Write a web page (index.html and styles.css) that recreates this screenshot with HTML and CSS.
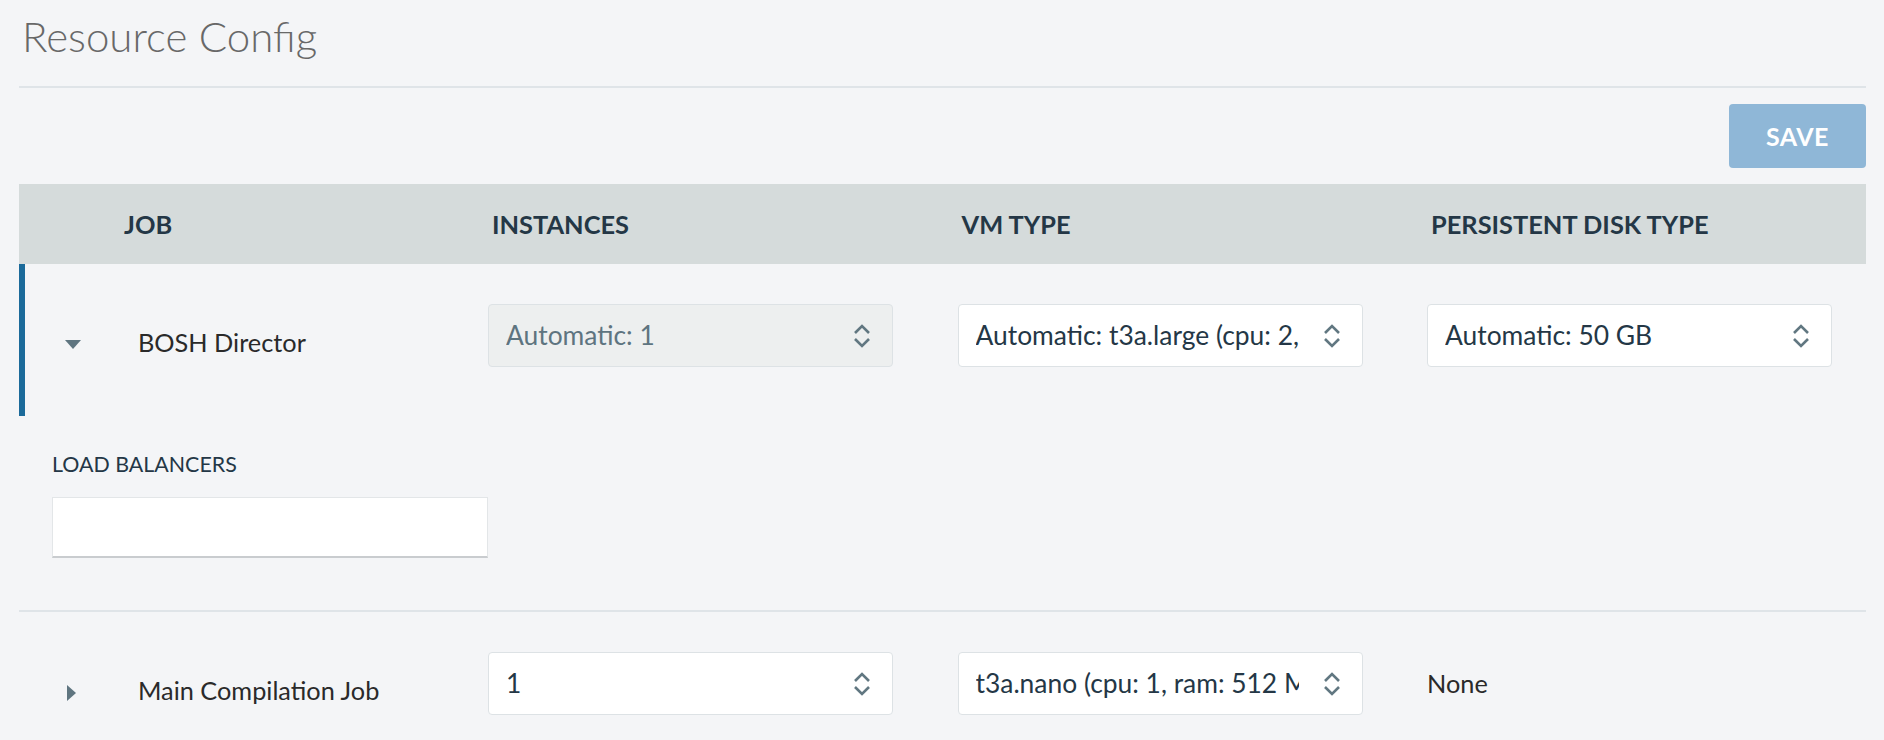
FILE: index.html
```html
<!DOCTYPE html>
<html>
<head>
<meta charset="utf-8">
<link rel="stylesheet" href="styles.css">
</head>
<body>
<div class="page">
  <h1 class="title">Resource Config</h1>
  <div class="toolbar"><button class="save">SAVE</button></div>
  <div class="table">
    <div class="thead">
      <div class="th"></div>
      <div class="th th-job">JOB</div>
      <div class="th"><span>INSTANCES</span></div>
      <div class="th"><span>VM TYPE</span></div>
      <div class="th"><span>PERSISTENT DISK TYPE</span></div>
    </div>
    <div class="job">
      <div class="job-row expanded">
        <div class="toggle"><span class="tri-down"></span></div>
        <div class="name">BOSH Director</div>
        <div class="cell"><div class="select disabled"><span class="select-text">Automatic: 1</span><svg class="chev" viewBox="0 0 18 28" width="18" height="28"><path d="M2 11 L9 4 L16 11 M2 17 L9 24 L16 17"/></svg></div></div>
        <div class="cell"><div class="select"><span class="select-text">Automatic: t3a.large (cpu: 2, ram: 8 GB, disk: 32 GB)</span><svg class="chev" viewBox="0 0 18 28" width="18" height="28"><path d="M2 11 L9 4 L16 11 M2 17 L9 24 L16 17"/></svg></div></div>
        <div class="cell"><div class="select"><span class="select-text">Automatic: 50 GB</span><svg class="chev" viewBox="0 0 18 28" width="18" height="28"><path d="M2 11 L9 4 L16 11 M2 17 L9 24 L16 17"/></svg></div></div>
      </div>
      <div class="details">
        <div class="label">LOAD BALANCERS</div>
        <div class="text-input"></div>
      </div>
    </div>
    <div class="job">
      <div class="job-row">
        <div class="toggle"><span class="tri-right"></span></div>
        <div class="name">Main Compilation Job</div>
        <div class="cell"><div class="select"><span class="select-text">1</span><svg class="chev" viewBox="0 0 18 28" width="18" height="28"><path d="M2 11 L9 4 L16 11 M2 17 L9 24 L16 17"/></svg></div></div>
        <div class="cell"><div class="select"><span class="select-text">t3a.nano (cpu: 1, ram: 512 MB, disk: 8 GB)</span><svg class="chev" viewBox="0 0 18 28" width="18" height="28"><path d="M2 11 L9 4 L16 11 M2 17 L9 24 L16 17"/></svg></div></div>
        <div class="cell"><div class="plain">None</div></div>
      </div>
    </div>
  </div>
</div>
</body>
</html>
```
FILE: styles.css
```css
html, body {
  margin: 0;
  padding: 0;
  background: #f4f5f7;
}
body {
  font-family: Lato, "Noto Sans", sans-serif;
  color: #2a2a2a;
}
.page {
  padding: 0 18px 0 19px;
}
.title {
  margin: 0;
  padding: 11px 0 25px 3px;
  font-size: 42px;
  font-weight: 300;
  line-height: 50px;
  color: #686868;
  border-bottom: 2px solid #dfe4e8;
}
.toolbar {
  display: flex;
  justify-content: flex-end;
  padding: 16px 0;
}
.save {
  width: 137px;
  height: 64px;
  border: 0;
  border-radius: 4px;
  background: #8fb7d7;
  color: #fff;
  font-family: Lato, sans-serif;
  font-weight: 700;
  font-size: 25px;
  letter-spacing: 0.5px;
}
.thead, .job-row {
  display: grid;
  grid-template-columns: 105px 364px 469.5px 469.5px 1fr;
}
.thead {
  height: 80px;
  align-items: center;
  background: #d5dbdb;
  color: #243746;
  font-weight: 700;
  font-size: 25.4px;
  white-space: nowrap;
}
.th span { padding-left: 4px; }
.job-row {
  height: 152px;
  box-sizing: border-box;
  padding-top: 40px;
  align-items: start;
}
.job-row.expanded {
  box-shadow: inset 6px 0 0 #1b6a9a;
}
.toggle {
  height: 63px;
  display: flex;
  align-items: center;
  padding-left: 46px;
  padding-top: 18px;
  box-sizing: border-box;
}
.tri-down {
  width: 0;
  height: 0;
  border-left: 8px solid transparent;
  border-right: 8px solid transparent;
  border-top: 9px solid #5f7580;
}
.tri-right {
  width: 0;
  height: 0;
  margin-left: 2px;
  border-top: 8px solid transparent;
  border-bottom: 8px solid transparent;
  border-left: 9px solid #5f7580;
}
.name {
  padding-left: 14px;
  padding-top: 7px;
  line-height: 63px;
  font-size: 25.3px;
  color: #2a2a2a;
  white-space: nowrap;
}
.select {
  width: 405px;
  height: 63px;
  box-sizing: border-box;
  border: 1px solid #dde2e5;
  border-radius: 4px;
  background: #fff;
  display: flex;
  align-items: center;
  padding-left: 17px;
  padding-right: 21px;
  font-size: 26.4px;
  color: #243746;
}
.select.disabled {
  background: #edefef;
  color: #5e7480;
}
.select-text {
  flex: 1;
  min-width: 0;
  overflow: hidden;
  white-space: nowrap;
  margin-right: 24px;
  margin-top: -2px;
}
.chev {
  flex: none;
  fill: none;
  stroke: #617781;
  stroke-width: 2.6;
}
.plain {
  height: 63px;
  line-height: 63px;
  font-size: 25.3px;
  color: #2a2a2a;
}
.details {
  padding: 34px 0 52px 33px;
  border-bottom: 2px solid #dfe4e8;
}
.label {
  font-size: 21.4px;
  line-height: 28px;
  color: #243746;
}
.text-input {
  margin-top: 19px;
  width: 436px;
  height: 61px;
  box-sizing: border-box;
  background: #fff;
  border: 1px solid #e3e6e8;
  border-bottom: 2px solid #c9cccf;
}
```
